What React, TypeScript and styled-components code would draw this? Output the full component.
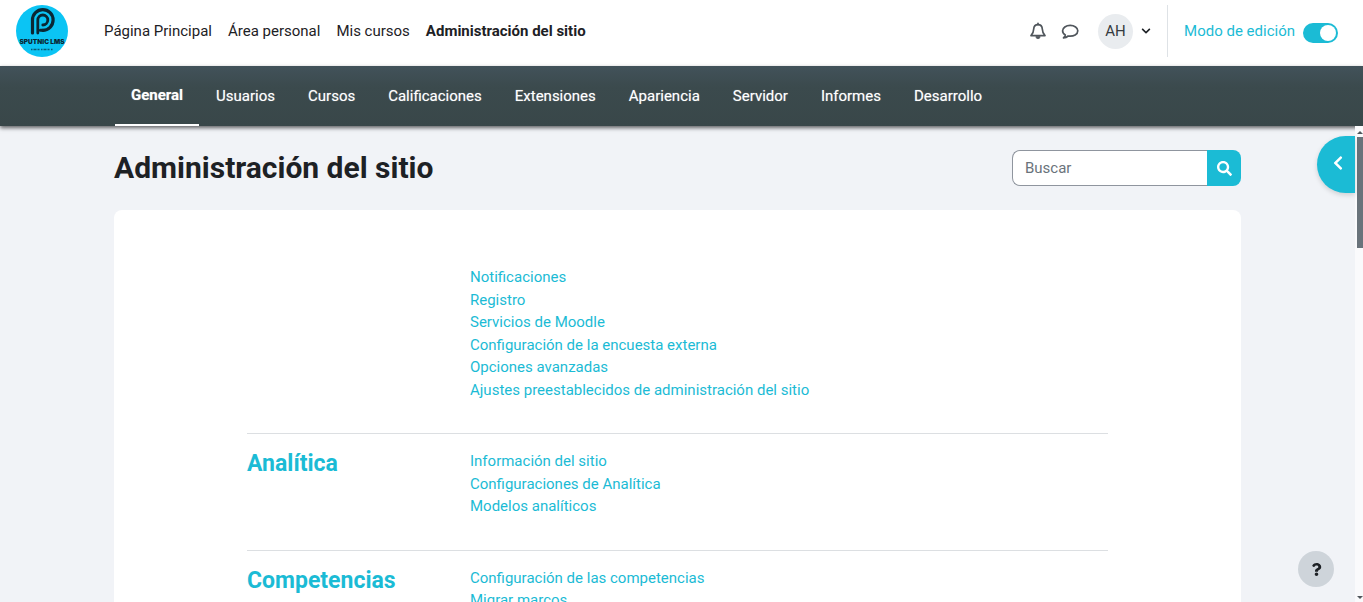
import React, { useState } from "react";
import styled, { createGlobalStyle } from "styled-components";
import { FaChevronDown, FaChevronLeft, FaSearch, FaQuestion } from "react-icons/fa";

const ACCENT = "#1bbbd5";

const GlobalStyle = createGlobalStyle`
  *, *::before, *::after { box-sizing: border-box; }
  body {
    margin: 0;
    overflow: hidden;
    background: #f1f3f7;
    color: #1d2125;
    font-family: Roboto, "Liberation Sans", sans-serif;
    font-size: 15px;
    line-height: 1.5;
  }
  button, input { font: inherit; }
  a { color: inherit; text-decoration: none; }
  a:hover { text-decoration: underline; }
`;

const Shell = styled.div`
  display: flex;
  flex-direction: column;
  height: 100vh;
`;

const TopBar = styled.header`
  display: flex;
  align-items: center;
  flex: none;
  height: 66px;
  padding: 0 25px 4px 16px;
  background: #fff;
`;

const LogoLink = styled.a`
  display: flex;
  margin-right: 28px;
`;

const PrimaryNav = styled.nav`
  display: flex;
  flex: 1;
`;

const PrimaryLink = styled.a<{ $current?: boolean }>`
  padding: 0 8px;
  font-weight: ${(p) => (p.$current ? 700 : 400)};
`;

const UserArea = styled.div`
  display: flex;
  align-items: center;
  height: 52px;
  padding-right: 16px;
  border-right: 1px solid #dee2e6;
`;

const IconButton = styled.button`
  display: flex;
  align-items: center;
  justify-content: center;
  width: 32px;
  height: 36px;
  padding: 0;
  border: 0;
  background: none;
  color: #50565c;
`;

const UserMenu = styled.button`
  display: flex;
  align-items: center;
  gap: 8px;
  margin-left: 12px;
  padding: 0;
  border: 0;
  background: none;
  color: #1d2125;
`;

const Avatar = styled.span`
  display: flex;
  align-items: center;
  justify-content: center;
  width: 35px;
  height: 35px;
  border-radius: 50%;
  background: #e9ecef;
  color: #343a40;
`;

const EditMode = styled.label`
  display: flex;
  align-items: center;
  gap: 8px;
  margin-left: 16px;
  color: ${ACCENT};
`;

const Switch = styled.input`
  appearance: none;
  display: flex;
  align-items: center;
  width: 35px;
  height: 20px;
  margin: 3px 0 0;
  padding: 2px;
  border-radius: 10px;
  background: #8f959e;
  &:checked { background: ${ACCENT}; justify-content: flex-end; }
  &::before {
    content: "";
    width: 16px;
    height: 16px;
    border-radius: 50%;
    background: #fff;
  }
`;

const SectionNav = styled.nav`
  flex: none;
  height: 60px;
  padding: 0 122px 0 115px;
  background: linear-gradient(#42525a, #3b4a4d 35%, #394749);
  box-shadow: 0 2px 4px rgba(0, 0, 0, 0.6);
  display: flex;
`;

const SectionTab = styled.a<{ $current?: boolean }>`
  display: flex;
  align-items: center;
  margin-right: 1px;
  padding: ${(p) => (p.$current ? "0 16px" : "2px 16px 0")};
  border-bottom: 2px solid ${(p) => (p.$current ? "#fff" : "transparent")};
  color: #fff;
  font-weight: ${(p) => (p.$current ? 700 : 400)};
  text-shadow: 0 0 1px rgba(255, 255, 255, 0.5);
`;

const Body = styled.div`
  display: flex;
  flex: 1;
  min-height: 0;
`;

const Page = styled.main`
  flex: 1;
  min-width: 0;
  overflow: hidden;
  padding: 24px 114px 0;
`;

const PageHeader = styled.div`
  display: flex;
  align-items: center;
  justify-content: space-between;
  height: 36px;
  margin-bottom: 24px;
`;

const Title = styled.h1`
  margin: 0;
  font-size: 30px;
  line-height: 36px;
  font-weight: 700;
`;

const Search = styled.form`
  display: flex;
  height: 36px;
`;

const SearchInput = styled.input`
  width: 195px;
  padding: 0 12px;
  border: 1px solid #8f959e;
  border-right: 0;
  border-radius: 8px 0 0 8px;
  background: #fff;
  color: #495057;
  &::placeholder { color: #6a737b; opacity: 1; }
`;

const SearchButton = styled.button`
  display: flex;
  align-items: center;
  justify-content: center;
  width: 34px;
  padding: 0;
  border: 0;
  border-radius: 0 8px 8px 0;
  background: ${ACCENT};
  color: #fff;
`;

const Card = styled.section`
  padding: 40px 133px;
  border-radius: 8px;
  background: #fff;
`;

const Category = styled.div`
  display: grid;
  grid-template-columns: 223px 1fr;
  padding: 16px 0 32px;
  & + & { border-top: 1px solid #dcdfe2; }
`;

const CategoryTitle = styled.h2`
  margin: 0;
  color: ${ACCENT};
  font-size: 23px;
  line-height: 27px;
  font-weight: 700;
`;

const LinkList = styled.ul`
  grid-column: 2;
  margin: 0;
  padding: 0;
  list-style: none;
  color: ${ACCENT};
`;

const DrawerToggle = styled.button`
  position: fixed;
  top: 136px;
  right: 8px;
  display: flex;
  align-items: center;
  justify-content: flex-end;
  width: 38px;
  height: 57px;
  padding: 0 9px 4px 0;
  border: 0;
  border-radius: 29px 0 0 29px;
  background: ${ACCENT};
  color: #fff;
  box-shadow: 0 2px 5px rgba(0, 0, 0, 0.15);
`;

const HelpButton = styled.button`
  position: fixed;
  right: 29px;
  bottom: 15px;
  display: flex;
  align-items: center;
  justify-content: center;
  width: 36px;
  height: 36px;
  padding: 0;
  border: 0;
  border-radius: 50%;
  background: #ced4da;
  color: #1d2125;
`;

const ScrollTrack = styled.div`
  display: flex;
  flex-direction: column;
  align-items: flex-end;
  flex: none;
  width: 8px;
  padding: 4px 0 2px 2px;
  background: #fafafc;
`;

const ScrollThumb = styled.div`
  width: 6px;
  height: 111px;
  margin: 2px 0 auto;
  background: #69737b;
`;

const ScrollArrow = ({ down }: { down?: boolean }) => (
  <svg width="6" height="5" viewBox="0 0 6 5" aria-hidden="true">
    <path d={down ? "M0 1h6L3 4z" : "M0 4h6L3 1z"} fill="#50565c" />
  </svg>
);

const BellIcon = () => (
  <svg width="18" height="18" viewBox="0 0 18 18" fill="none" stroke="currentColor" strokeWidth="1.7" strokeLinejoin="round" aria-hidden="true">
    <path d="M9 2.6C6.2 2.6 4.8 4.6 4.7 7C4.6 10.3 3.6 12 2 13.6H16C14.4 12 13.4 10.3 13.3 7C13.2 4.6 11.8 2.6 9 2.6Z" />
    <path d="M9 2.6V1.4" strokeLinecap="round" />
    <path d="M6.9 14.6a2.1 2.1 0 0 0 4.2 0z" fill="currentColor" strokeWidth="0.8" />
  </svg>
);

const CommentIcon = () => (
  <svg width="18" height="18" viewBox="0 0 18 18" fill="none" stroke="currentColor" strokeWidth="1.7" strokeLinejoin="round" aria-hidden="true">
    <path d="M9.2 3.4C5 3.4 1.6 5.8 1.6 8.8C1.6 10.6 2.7 12 4.3 12.9C4.2 14.1 3.4 15.1 2.5 15.9C4.4 15.7 6 15 7.2 14C13 14.7 16.8 12.2 16.8 8.8C16.8 5.8 13.4 3.4 9.2 3.4Z" />
  </svg>
);

const Logo = () => (
  <svg width="52" height="52" viewBox="0 0 52 52" role="img" aria-label="Sputnic LMS">
    <circle cx="26" cy="26" r="26" fill="#0bc4f4" />
    <g fill="none" stroke="#0a2733" strokeLinecap="round">
      <path d="M16.5 28V15a10.3 10.3 0 1 1 10.3 10.3" strokeWidth="3.2" />
      <path d="M21.8 28V15a5 5 0 1 1 5 5" strokeWidth="2.8" />
      <path d="M26.8 25.3h-2.5" strokeWidth="3" />
    </g>
    <text x="26" y="39" textAnchor="middle" fontFamily="Inter, sans-serif" fontSize="6.5" fontWeight="900" fill="#0a2733">
      SPUTNIC LMS
    </text>
    <path d="M15 44.5h22" stroke="#0a5c76" strokeWidth="1.3" strokeDasharray="1.5 1 3 1 2 1.5" />
  </svg>
);

const primary = ["Página Principal", "Área personal", "Mis cursos", "Administración del sitio"];

const tabs = [
  "General", "Usuarios", "Cursos", "Calificaciones", "Extensiones",
  "Apariencia", "Servidor", "Informes", "Desarrollo",
];

const categories: { title?: string; links: string[] }[] = [
  {
    links: [
      "Notificaciones",
      "Registro",
      "Servicios de Moodle",
      "Configuración de la encuesta externa",
      "Opciones avanzadas",
      "Ajustes preestablecidos de administración del sitio",
    ],
  },
  {
    title: "Analítica",
    links: ["Información del sitio", "Configuraciones de Analítica", "Modelos analíticos"],
  },
  {
    title: "Competencias",
    links: ["Configuración de las competencias", "Migrar marcos"],
  },
];

export default function App() {
  const [editing, setEditing] = useState(true);
  return (
    <Shell>
      <GlobalStyle />
      <TopBar>
        <LogoLink href="#"><Logo /></LogoLink>
        <PrimaryNav aria-label="Principal">
          {primary.map((name, i) => (
            <PrimaryLink key={name} href="#" $current={i === 3}>{name}</PrimaryLink>
          ))}
        </PrimaryNav>
        <UserArea>
          <IconButton aria-label="Notificaciones"><BellIcon /></IconButton>
          <IconButton aria-label="Mensajes"><CommentIcon /></IconButton>
          <UserMenu aria-label="Menú de usuario">
            <Avatar>AH</Avatar>
            <FaChevronDown size={10} />
          </UserMenu>
        </UserArea>
        <EditMode>
          Modo de edición
          <Switch type="checkbox" checked={editing} onChange={(e) => setEditing(e.target.checked)} />
        </EditMode>
      </TopBar>
      <SectionNav aria-label="Administración">
        {tabs.map((name, i) => (
          <SectionTab key={name} href="#" $current={i === 0}>{name}</SectionTab>
        ))}
      </SectionNav>
      <Body>
        <Page>
          <PageHeader>
            <Title>Administración del sitio</Title>
            <Search onSubmit={(e) => e.preventDefault()}>
              <SearchInput type="text" placeholder="Buscar" aria-label="Buscar" />
              <SearchButton aria-label="Enviar búsqueda"><FaSearch size={15} /></SearchButton>
            </Search>
          </PageHeader>
          <Card>
            {categories.map((c, i) => (
              <Category key={i}>
                {c.title && <CategoryTitle><a href="#">{c.title}</a></CategoryTitle>}
                <LinkList>
                  {c.links.map((l) => (
                    <li key={l}><a href="#">{l}</a></li>
                  ))}
                </LinkList>
              </Category>
            ))}
          </Card>
        </Page>
        <ScrollTrack aria-hidden="true">
          <ScrollArrow />
          <ScrollThumb />
          <ScrollArrow down />
        </ScrollTrack>
      </Body>
      <DrawerToggle aria-label="Abrir cajón de bloques"><FaChevronLeft size={16} /></DrawerToggle>
      <HelpButton aria-label="Ayuda"><FaQuestion size={13} /></HelpButton>
    </Shell>
  );
}
